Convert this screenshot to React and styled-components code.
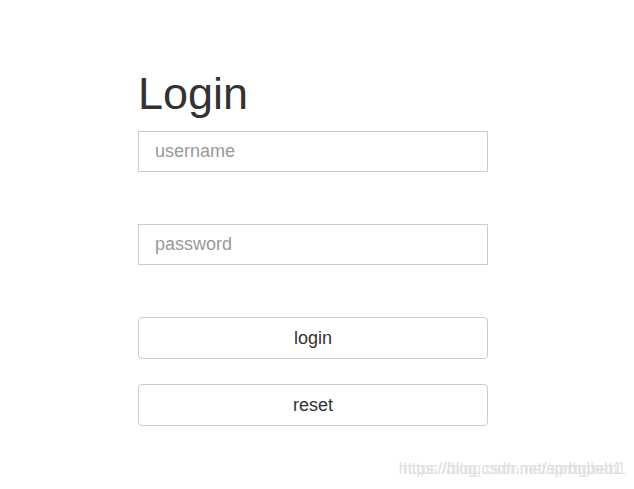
import React from 'react';
import styled, {createGlobalStyle} from 'styled-components';

const Global = createGlobalStyle`
body {
    margin: 0;
    background: #fff;
    font-family: "Liberation Sans", Arial, sans-serif;
    color: #333;
}
`

const Page = styled.div`
position: relative;
width: 634px;
height: 489px;
padding: 69px 0 0 138px;
box-sizing: border-box;
`

const Form = styled.form`
width: 350px;
display: flex;
flex-direction: column;
`

const Title = styled.h1`
margin: 0 0 12px;
font-size: 45px;
line-height: 50px;
font-weight: normal;
color: #333;
`

const Input = styled.input`
box-sizing: border-box;
height: 41px;
padding: 0 16px;
border: 1px solid #ccc;
border-radius: 0;
font-family: inherit;
font-size: 18px;
color: #333;
margin-bottom: ${({gap}) => gap}px;
outline: none;

&::placeholder {
    color: #999;
}
`

const Button = styled.button`
box-sizing: border-box;
height: 42px;
border: 1px solid #ccc;
border-radius: 4px;
background: #fff;
font-family: inherit;
font-size: 18px;
color: #333;
margin-bottom: ${({gap}) => gap || 0}px;
cursor: pointer;
`

// csdn watermark, doubled up in the screenshot
const Watermark = styled.div`
position: absolute;
right: 12px;
bottom: 11px;
font-size: 16px;
color: #dedede;
text-shadow: 4px 0 #e8e8e8;
white-space: nowrap;
`

const App = () => {
    return(
        <Page>
            <Global />
            <Form onSubmit={e => e.preventDefault()}>
                <Title>Login</Title>
                <Input type="text" placeholder="username" gap={52} />
                <Input type="password" placeholder="password" gap={52} />
                <Button type="submit" gap={25}>login</Button>
                <Button type="reset">reset</Button>
            </Form>
            <Watermark>https://blog.csdn.net/sprbgbeb1</Watermark>
        </Page>
    )
}

export default App;
